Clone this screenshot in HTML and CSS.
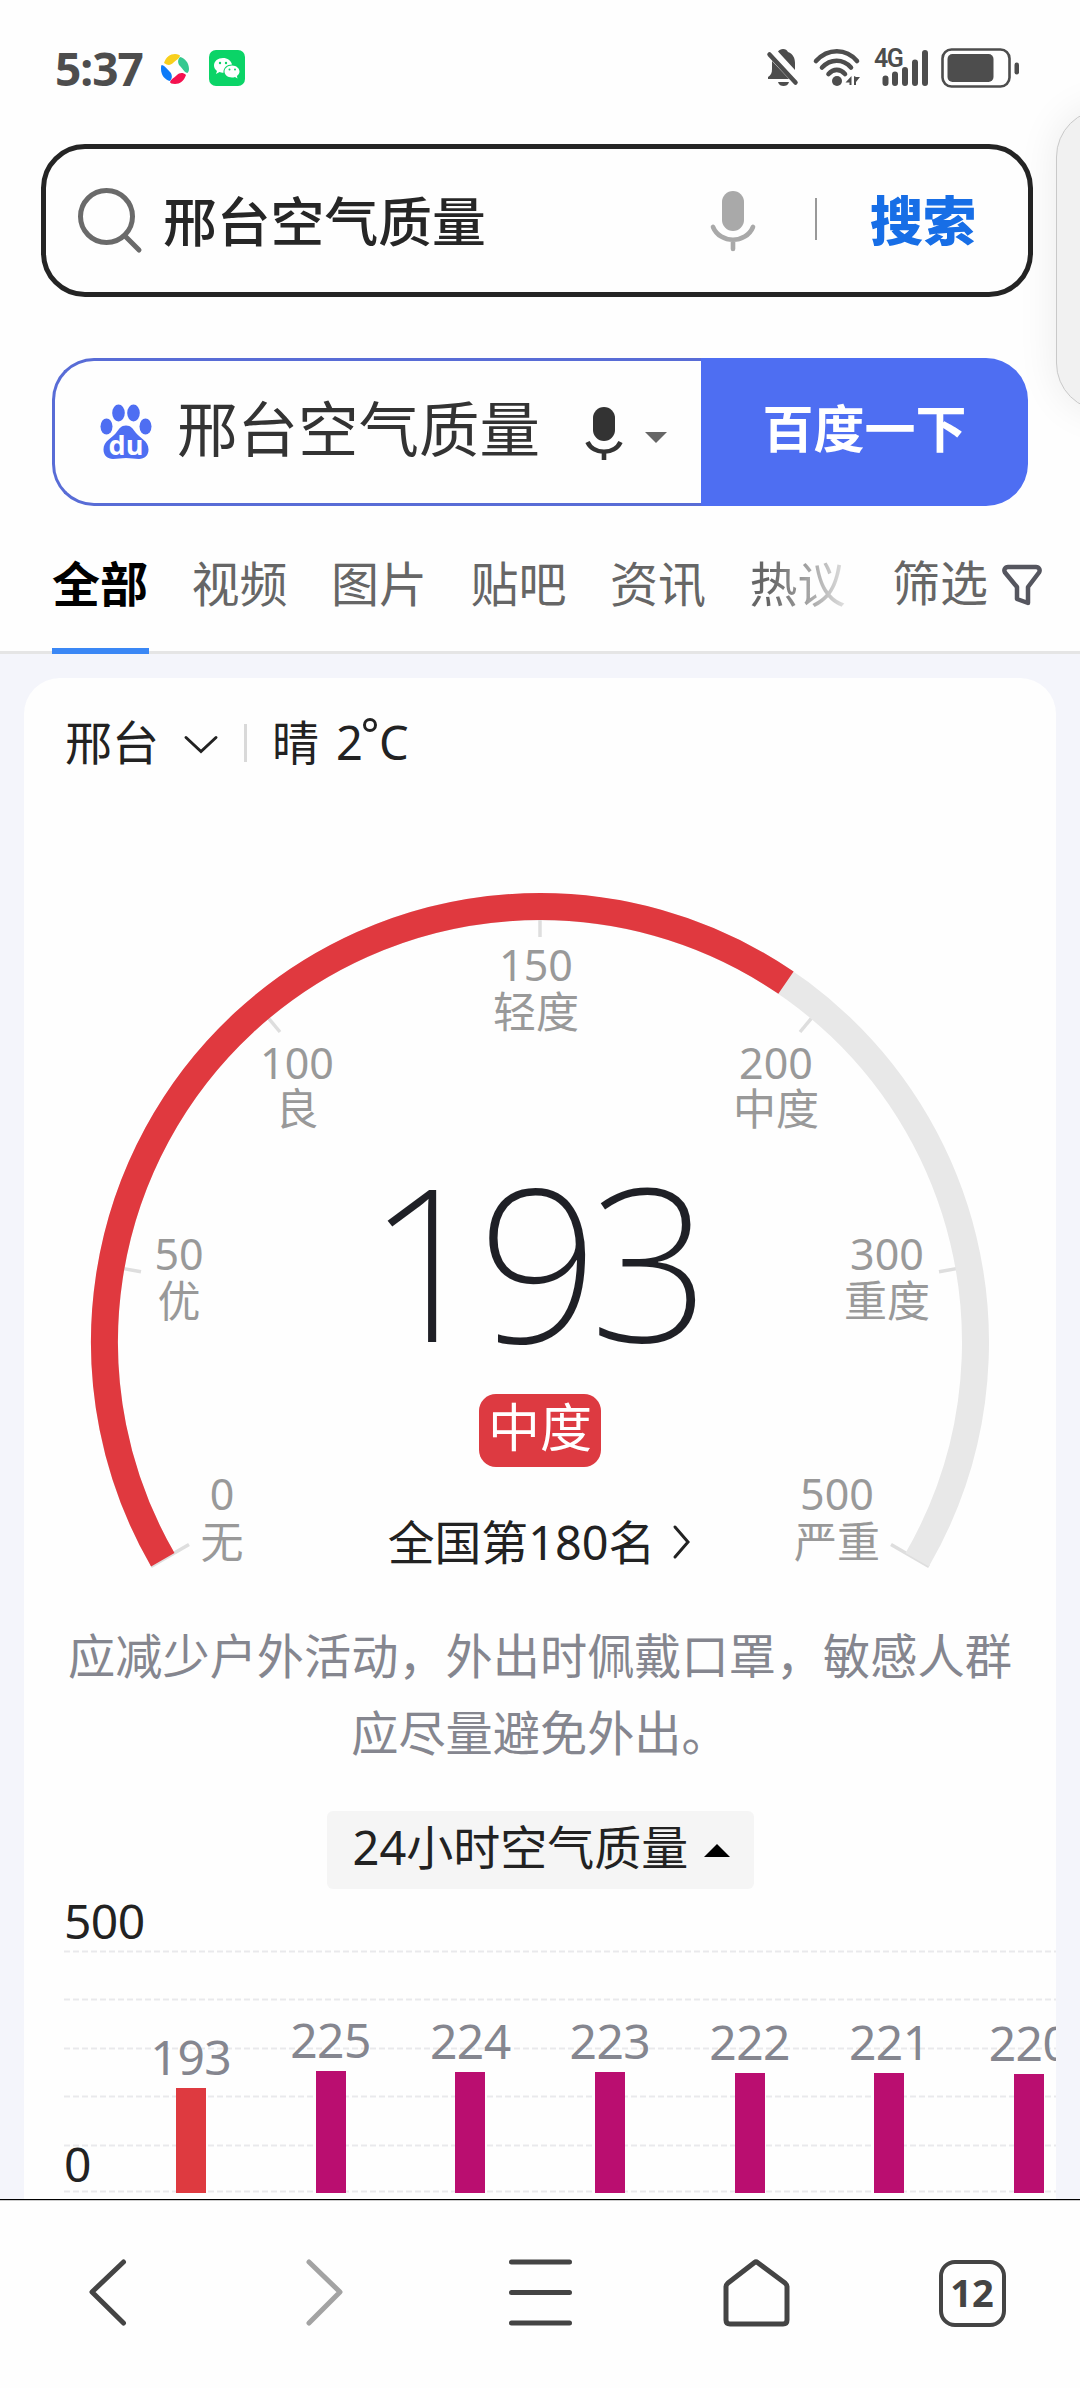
FILE: index.html
```
<!DOCTYPE html>
<html lang="zh-CN">
<head>
    <meta charset="UTF-8">
    <meta name="viewport" content="width=device-width, initial-scale=1.0">
    <title>邢台空气质量</title>
    <link rel="stylesheet" href="styles.css">
</head>
<body>
    <div class="phone">
        <!-- Status bar -->
        <div class="status-bar">
            <span class="clock">5:37</span>
            <svg class="pinwheel" width="30" height="32" viewBox="0 0 30 32">
                <path d="M4 10C6 4 10 1 15 1c3 0 5 1 5 2-1 3-4 4-7 7-2 2-5 3-9 0z" fill="#f8cf1c"/>
                <path d="M20 4c5 1 9 6 9 12 0 2-1 4-2 4-3-1-4-4-7-7-2-2-3-6 0-9z" fill="#36c890"/>
                <path d="M26 22c-2 6-6 9-11 9-3 0-5-1-5-2 1-3 4-4 7-7 2-2 6-3 9 0z" fill="#f4114f"/>
                <path d="M10 28C5 27 1 22 1 16c0-2 0-4 1-4 3 1 5 4 8 7 2 2 3 6 0 9z" fill="#0d7bf8"/>
            </svg>
            <svg class="wechat" width="36" height="36" viewBox="0 0 36 36">
                <rect width="36" height="36" rx="7" fill="#0bd467"/>
                <path d="M14 8c-5 0-9 3-9 7.500 0 2 1 4 3 5.500l-1 3 3.500-2c1 .5 2.500.8 4 .8C14 18 18 14.500 23 14.500 22 10.500 18.500 8 14 8z" fill="#fff"/>
                <path d="M23 15.500c-4.500 0-7.500 3-7.500 6s3 6 7.500 6c1 0 2-.2 3-.6l2.500 1.500-.6-2.400c1.600-1.200 2.600-2.800 2.600-4.500 0-3-3-6-7.500-6z" fill="#fff"/>
                <g fill="#0bd467">
                    <circle cx="11" cy="13" r="1.200"/><circle cx="17" cy="13" r="1.200"/>
                    <circle cx="20.500" cy="19.500" r="1"/><circle cx="26" cy="19.500" r="1"/>
                </g>
            </svg>
            <svg class="signals" width="254" height="40" viewBox="0 0 254 40">
                <!-- muted bell -->
                <g fill="#4d4d4d">
                    <path d="M12 3.500c1-1.500 3-2.500 5-2.500 2.500 0 4 1 5 3 5 2 7 6 7 11v7z"/>
                    <path d="M6 13l17 18H2v-2c3-2 4-4 4-8z"/>
                    <path d="M12 34h11c-1 3-3 4-5.500 4S13 37 12 34z"/>
                    <path d="M3.500 6.500l26 28" stroke="#4d4d4d" stroke-width="4.500" stroke-linecap="round"/>
                </g>
                <!-- wifi -->
                <g fill="none" stroke="#4d4d4d" stroke-width="4.600" stroke-linecap="round">
                    <path d="M50 13c12-13 30-13 41 0"/>
                    <path d="M56 19.500c8.500-9 21-9 29 0"/>
                    <path d="M62.500 26c5-5.500 11.500-5.500 16.500 0"/>
                </g>
                <circle cx="71" cy="33" r="5" fill="#4d4d4d"/>
                <path d="M85.500 28v9h-2v-2.500h-4zM88 28v9h2v-3l4-5h-4z" fill="#4d4d4d"/>
                <!-- mobile signal -->
                <text class="net-type" x="108" y="19">4G</text>
                <g stroke="#4d4d4d" stroke-width="6" stroke-linecap="round">
                    <path d="M119.500 30.500v4.500M129 26.500V35M139 22v13M149 14.500V35M159 5v30"/>
                </g>
                <!-- battery -->
                <rect x="176.500" y="1.500" width="67" height="37" rx="9" fill="none" stroke="#4d4d4d" stroke-width="2.600"/>
                <rect x="181.500" y="6" width="46" height="28" rx="5" fill="#4d4d4d"/>
                <rect x="248.500" y="14.500" width="4.500" height="12" rx="2.200" fill="#4d4d4d"/>
            </svg>
        </div>

        <!-- Browser address box -->
        <div class="address-box">
            <svg class="lens" width="66" height="66" viewBox="0 0 66 66" fill="none" stroke="#6a6a6a" stroke-width="5" stroke-linecap="round">
                <circle cx="28.500" cy="28.500" r="26"/>
                <path d="M47 48l14 14"/>
            </svg>
            <span class="address-text">邢台空气质量</span>
            <svg class="mic" width="46" height="62" viewBox="0 0 46 62">
                <rect x="12" y="1" width="22" height="40" rx="11" fill="#a9a9a9"/>
                <path d="M3 37c7 17 33 17 40 0M23 50v9" fill="none" stroke="#a9a9a9" stroke-width="4.600" stroke-linecap="round"/>
            </svg>
            <span class="divider"></span>
            <span class="go">搜索</span>
        </div>

        <!-- Baidu search form -->
        <div class="search-form">
            <div class="search-field">
                <svg class="paw" width="52" height="56" viewBox="0 0 52 56" fill="#4e6ef2">
                    <ellipse cx="18.500" cy="9" rx="6.300" ry="8.500"/>
                    <ellipse cx="33.500" cy="9" rx="6.300" ry="8.500"/>
                    <ellipse cx="6.500" cy="22.500" rx="6" ry="8"/>
                    <ellipse cx="45.500" cy="22.500" rx="6" ry="8"/>
                    <path d="M26 21.500c-5 0-7 3.500-10 7.500C12 34 3.500 37 3.500 45.500c0 6 4 9.500 9.500 9.500 5 0 8-1 13-1s8 1 13 1c5.500 0 9.500-3.500 9.500-9.500C48.500 37 40 34 36 29c-3-4-5-7.500-10-7.500z"/>
                    <text class="paw-text" x="26" y="50.500" text-anchor="middle">du</text>
                </svg>
                <span class="query">邢台空气质量</span>
                <svg class="mic-dark" width="36" height="54" viewBox="0 0 36 54">
                    <rect x="7" y="0" width="22" height="34" rx="11" fill="#333"/>
                    <path d="M1.500 35c6 13 27 13 33 0M18 45v8" fill="none" stroke="#333" stroke-width="4.600"/>
                </svg>
                <span class="caret-down"></span>
            </div>
            <div class="search-button">百度一下</div>
        </div>

        <!-- Result tabs -->
        <div class="tabs">
            <span class="tab active">全部</span>
            <span class="tab">视频</span>
            <span class="tab">图片</span>
            <span class="tab">贴吧</span>
            <span class="tab">资讯</span>
            <span class="tab fade">热议</span>
            <span class="filter">筛选</span>
            <svg class="funnel" width="40" height="42" viewBox="0 0 40 42" fill="none" stroke="#55565f" stroke-width="4.500" stroke-linejoin="round">
                <path d="M6 3h28c3 0 4.500 3 3 5.500L26 23v16l-11-4V23L3 8.500C1.500 6 3 3 6 3z"/>
            </svg>
        </div>

        <!-- Results -->
        <div class="feed">
            <div class="card">
                <div class="city-row">
                    <span class="city">邢台</span>
                    <svg class="chevron-down" width="36" height="20" viewBox="0 0 36 20" fill="none" stroke="#222" stroke-width="3" stroke-linecap="round">
                        <path d="M3 2.500l15 14 15-14"/>
                    </svg>
                    <span class="city-divider"></span>
                    <span class="weather">晴</span>
                    <span class="temperature">2<i class="degree"></i>C</span>
                </div>

                <div class="gauge">
                    <svg class="dial" width="1032" height="794" viewBox="-516 -536 1032 794">
                        <g stroke="#dedede" stroke-width="3.500">
                            <path d="M-389 224.500L-351 202.500"/>
                            <path d="M-422 -74.400L-399 -70.300"/>
                            <path d="M-275 -328L-260 -310"/>
                            <path d="M0 -422V-405"/>
                            <path d="M275 -328L260 -310"/>
                            <path d="M422 -74.400L399 -70.300"/>
                            <path d="M389 224.500L351 202.500"/>
                        </g>
                        <g fill="none" stroke-width="27">
                            <path d="M-377.200 217.800A435.500 435.500 0 1 1 377.200 217.800" stroke="#e8e8e8"/>
                            <path d="M-377.200 217.800A435.500 435.500 0 0 1 246 -359.300" stroke="#e0393f"/>
                        </g>
                        <g class="dial-labels">
                            <text x="-318" y="167.500">0</text><text x="-318" y="216">无</text>
                            <text x="-361" y="-72">50</text><text x="-361" y="-25">优</text>
                            <text x="-243" y="-263.500">100</text><text x="-243" y="-217">良</text>
                            <text x="-4" y="-361.500">150</text><text x="-4" y="-314">轻度</text>
                            <text x="236" y="-263.500">200</text><text x="236" y="-217">中度</text>
                            <text x="347" y="-72">300</text><text x="347" y="-25">重度</text>
                            <text x="297" y="167.500">500</text><text x="297" y="216">严重</text>
                        </g>
                    </svg>
                    <div class="reading">
                        <div class="aqi">193</div>
                        <div class="level">中度</div>
                        <div class="rank">
                            全国第180名
                            <svg width="20" height="36" viewBox="0 0 20 36" fill="none" stroke="#222" stroke-width="3" stroke-linecap="round">
                                <path d="M3 3l13 15L3 33"/>
                            </svg>
                        </div>
                    </div>
                </div>

                <p class="advice">应减少户外活动，外出时佩戴口罩，敏感人群应尽量避免外出。</p>

                <div class="toggle">
                    <span>24小时空气质量</span>
                    <span class="caret-up"></span>
                </div>

                <div class="chart">
                    <svg class="grid-lines" width="1032" height="310" viewBox="0 0 1032 310" stroke="#e9e9ec" stroke-width="2" stroke-dasharray="6 3">
                        <path d="M40 62.500H1032M40 110.500H1032M40 159.500H1032M40 207.500H1032M40 256.500H1032M40 302.500H1032"/>
                    </svg>
                    <div class="axis">
                        <span>500</span>
                        <span>0</span>
                    </div>
                    <div class="bars">
                        <div class="col"><span>193</span><div class="bar red" style="height: 105px"></div></div>
                        <div class="col"><span>225</span><div class="bar" style="height: 122px"></div></div>
                        <div class="col"><span>224</span><div class="bar" style="height: 121px"></div></div>
                        <div class="col"><span>223</span><div class="bar" style="height: 121px"></div></div>
                        <div class="col"><span>222</span><div class="bar" style="height: 120px"></div></div>
                        <div class="col"><span>221</span><div class="bar" style="height: 120px"></div></div>
                        <div class="col"><span>220</span><div class="bar" style="height: 119px"></div></div>
                    </div>
                </div>
            </div>
        </div>

        <!-- Browser toolbar -->
        <div class="toolbar">
            <div class="tool">
                <svg width="72" height="72" viewBox="0 0 72 72"><path d="M51.500 5L20 35l31.500 31"/></svg>
            </div>
            <div class="tool disabled">
                <svg width="72" height="72" viewBox="0 0 72 72"><path d="M21 5l31 30-31 31"/></svg>
            </div>
            <div class="tool">
                <svg width="72" height="72" viewBox="0 0 72 72"><path d="M7.500 5h58M7.500 35.500h58M7.500 66h58"/></svg>
            </div>
            <div class="tool">
                <svg width="72" height="72" viewBox="0 0 72 72"><path d="M37.500 5.500L65 26c1 1 2 2 2 3.500V63c0 2.500-1.500 4-4 4H10c-2.500 0-4-1.500-4-4V29.500c0-1.500 1-2.500 2-3.500L34.500 5.500c1-.8 2-.8 3 0z"/></svg>
            </div>
            <div class="tool">
                <span class="tab-count">12</span>
            </div>
        </div>

        <div class="side-panel"></div>
    </div>
</body>
</html>
```
FILE: styles.css
```
* {
    box-sizing: border-box;
}

body {
    margin: 0;
    background: #fefefe;
    font-family: "Noto Sans", "Noto Sans CJK SC", sans-serif;
    color: #222;
}

svg {
    flex: none;
    overflow: visible;
}

.phone {
    position: relative;
    width: 1080px;
    height: 2388px;
    overflow: hidden;
    display: flex;
    flex-direction: column;
}

/* Status bar */
.status-bar {
    height: 144px;
    padding: 0 60px 9px 55px;
    display: flex;
    align-items: center;
}

.clock {
    width: 105px;
    font-size: 46px;
    font-weight: 700;
    line-height: 44px;
    letter-spacing: -1px;
    color: #4d4d4d;
}

.pinwheel {
    margin-top: 2px;
}

.wechat {
    margin-left: 19px;
}

.signals {
    margin-left: auto;
}

.net-type {
    font-family: Roboto, sans-serif;
    font-size: 25px;
    font-weight: 600;
    letter-spacing: -1.5px;
    fill: #4d4d4d;
}

/* Address box */
.address-box {
    height: 153px;
    margin: 0 47px 0 41px;
    padding-left: 32px;
    border: 5px solid #242424;
    border-radius: 44px;
    display: flex;
    align-items: center;
}

.address-text {
    width: 547px;
    margin-left: 19px;
    font-size: 53.800px;
    font-weight: 500;
    line-height: 60px;
    color: #262626;
}

.divider {
    width: 2px;
    height: 42px;
    margin: 0 0 4px 59px;
    background: #999;
}

.go {
    margin-left: 53px;
    font-size: 53px;
    font-weight: 900;
    line-height: 60px;
    color: #176ee6;
}

/* Search form */
.search-form {
    height: 148px;
    margin: 61px 52px 0;
    display: flex;
}

.search-field {
    width: 649px;
    padding-left: 45px;
    border: 3px solid #586cd6;
    border-right: none;
    border-radius: 42px 0 0 42px;
    display: flex;
    align-items: center;
}

.paw-text {
    font-family: "Open Sans", sans-serif;
    font-size: 27px;
    font-weight: 700;
    fill: #fff;
}

.query {
    width: 410px;
    margin: 0 0 6px 25px;
    font-size: 60.500px;
    line-height: 70px;
    color: #333;
}

.mic-dark {
    margin: 4px 23px 0 -1px;
}

.caret-down {
    margin-top: 10px;
    border: 11px solid transparent;
    border-top-color: #666;
    border-bottom: none;
}

.search-button {
    flex: 1;
    border-radius: 0 42px 42px 0;
    background: #4e6ef2;
    color: #fff;
    font-size: 51px;
    font-weight: 700;
    line-height: 141px;
    text-align: center;
}

/* Tabs */
.tabs {
    height: 148px;
    padding-left: 52px;
    border-bottom: 3px solid #e5e5e5;
    display: flex;
    font-size: 48px;
    line-height: 50px;
    color: #666;
}

.tab {
    width: 97px;
    height: 148px;
    margin-right: 42.500px;
    padding-top: 53px;
    white-space: nowrap;
}

.tab.active {
    border-bottom: 6px solid #3a87f5;
    font-weight: 700;
    color: #000;
}

.tab.fade {
    background: linear-gradient(90deg, #666 20%, #e2e2e2);
    background-clip: text;
    -webkit-background-clip: text;
    color: transparent;
}

.filter {
    margin-left: 3px;
    padding-top: 52px;
}

.funnel {
    margin: 58px 0 0 14px;
}

/* Result card */
.feed {
    height: 1545px;
    padding: 24px 24px 0;
    background: #f4f5fb;
}

.card {
    height: 1521px;
    border-radius: 36px 36px 0 0;
    background: #fefefe;
    overflow: hidden;
}

.city-row {
    height: 128px;
    padding-left: 41px;
    display: flex;
    align-items: center;
    font-size: 47px;
    line-height: 50px;
}

.chevron-down {
    margin: 6px 0 0 24px;
}

.city-divider {
    width: 3px;
    height: 38px;
    margin: 2px 25px 0;
    background: #d9d9d9;
}

.temperature {
    margin-left: 17px;
    display: flex;
}

.degree {
    width: 14px;
    height: 14px;
    margin: 1px 2px 0 0;
    border: 3px solid #222;
    border-radius: 50%;
}

/* Gauge, dial and reading share one cell */
.gauge {
    display: grid;
}

.dial,
.reading {
    grid-area: 1 / 1;
}

.dial-labels {
    font-size: 43px;
    fill: #999;
    text-anchor: middle;
}

.reading {
    padding-top: 348px;
    display: flex;
    flex-direction: column;
    align-items: center;
}

.aqi {
    height: 240px;
    margin-right: 13px;
    font-size: 213px;
    font-weight: 200;
    line-height: 211px;
    letter-spacing: -10px;
    color: #1f2026;
}

.level {
    width: 122px;
    height: 73px;
    border-radius: 17px;
    background: #dd3a41;
    color: #fff;
    font-size: 52px;
    line-height: 65px;
    text-align: center;
}

.rank {
    margin-top: 50px;
    display: flex;
    align-items: center;
    gap: 17px;
    font-size: 46.800px;
    line-height: 50px;
}

.advice {
    margin: 18px 40px 39px;
    font-size: 47.200px;
    line-height: 77px;
    text-align: center;
    color: #85868f;
}

.toggle {
    width: 427px;
    height: 78px;
    margin: 0 auto;
    padding-left: 26px;
    border-radius: 6px;
    background: #f5f5f5;
    display: flex;
    align-items: center;
    font-size: 47px;
    line-height: 70px;
}

.toggle span:first-child {
    padding-bottom: 7px;
}

.caret-up {
    margin-left: 16px;
    border: 13px solid transparent;
    border-bottom-color: #000;
    border-top: none;
}

/* 24h chart */
.chart {
    height: 310px;
    display: grid;
    grid-template-columns: 1032px;
    font-size: 48px;
    line-height: 50px;
    letter-spacing: -0.600px;
}

.grid-lines,
.axis,
.bars {
    grid-area: 1 / 1;
}

.axis {
    padding: 7px 0 0 40px;
    display: flex;
    flex-direction: column;
    gap: 193px;
}

.bars {
    padding: 0 0 6px 97px;
    display: flex;
    align-items: flex-end;
}

.col {
    flex: none;
    width: 139.700px;
    display: flex;
    flex-direction: column;
    align-items: center;
    gap: 6px;
    color: #85868f;
}

.bar {
    width: 30px;
    background: #ba0e70;
}

.bar.red {
    background: #de3a40;
}

/* Toolbar */
.toolbar {
    height: 189px;
    padding-bottom: 2px;
    border-top: 1px solid #000;
    box-shadow: inset 0 1px #ccc;
    display: flex;
    align-items: center;
}

.tool {
    flex: 1;
    display: flex;
    justify-content: center;
}

.tool svg {
    fill: none;
    stroke: #444;
    stroke-width: 5;
    stroke-linecap: round;
    stroke-linejoin: round;
}

.tool.disabled svg {
    stroke: #a3a3a3;
}

.tab-count {
    width: 67px;
    height: 67px;
    border: 4.500px solid #444;
    border-radius: 16px;
    font-size: 38px;
    font-weight: 700;
    line-height: 57px;
    text-align: center;
    color: #444;
}

/* Edge panel peeking in from the right */
.side-panel {
    position: absolute;
    top: 109px;
    left: 1056px;
    width: 120px;
    height: 302px;
    border: 1px solid #c9c9c9;
    border-radius: 48px;
    background: #f1f1f1;
    box-shadow: 0 0 40px rgba(0, 0, 0, 0.08);
}
```
